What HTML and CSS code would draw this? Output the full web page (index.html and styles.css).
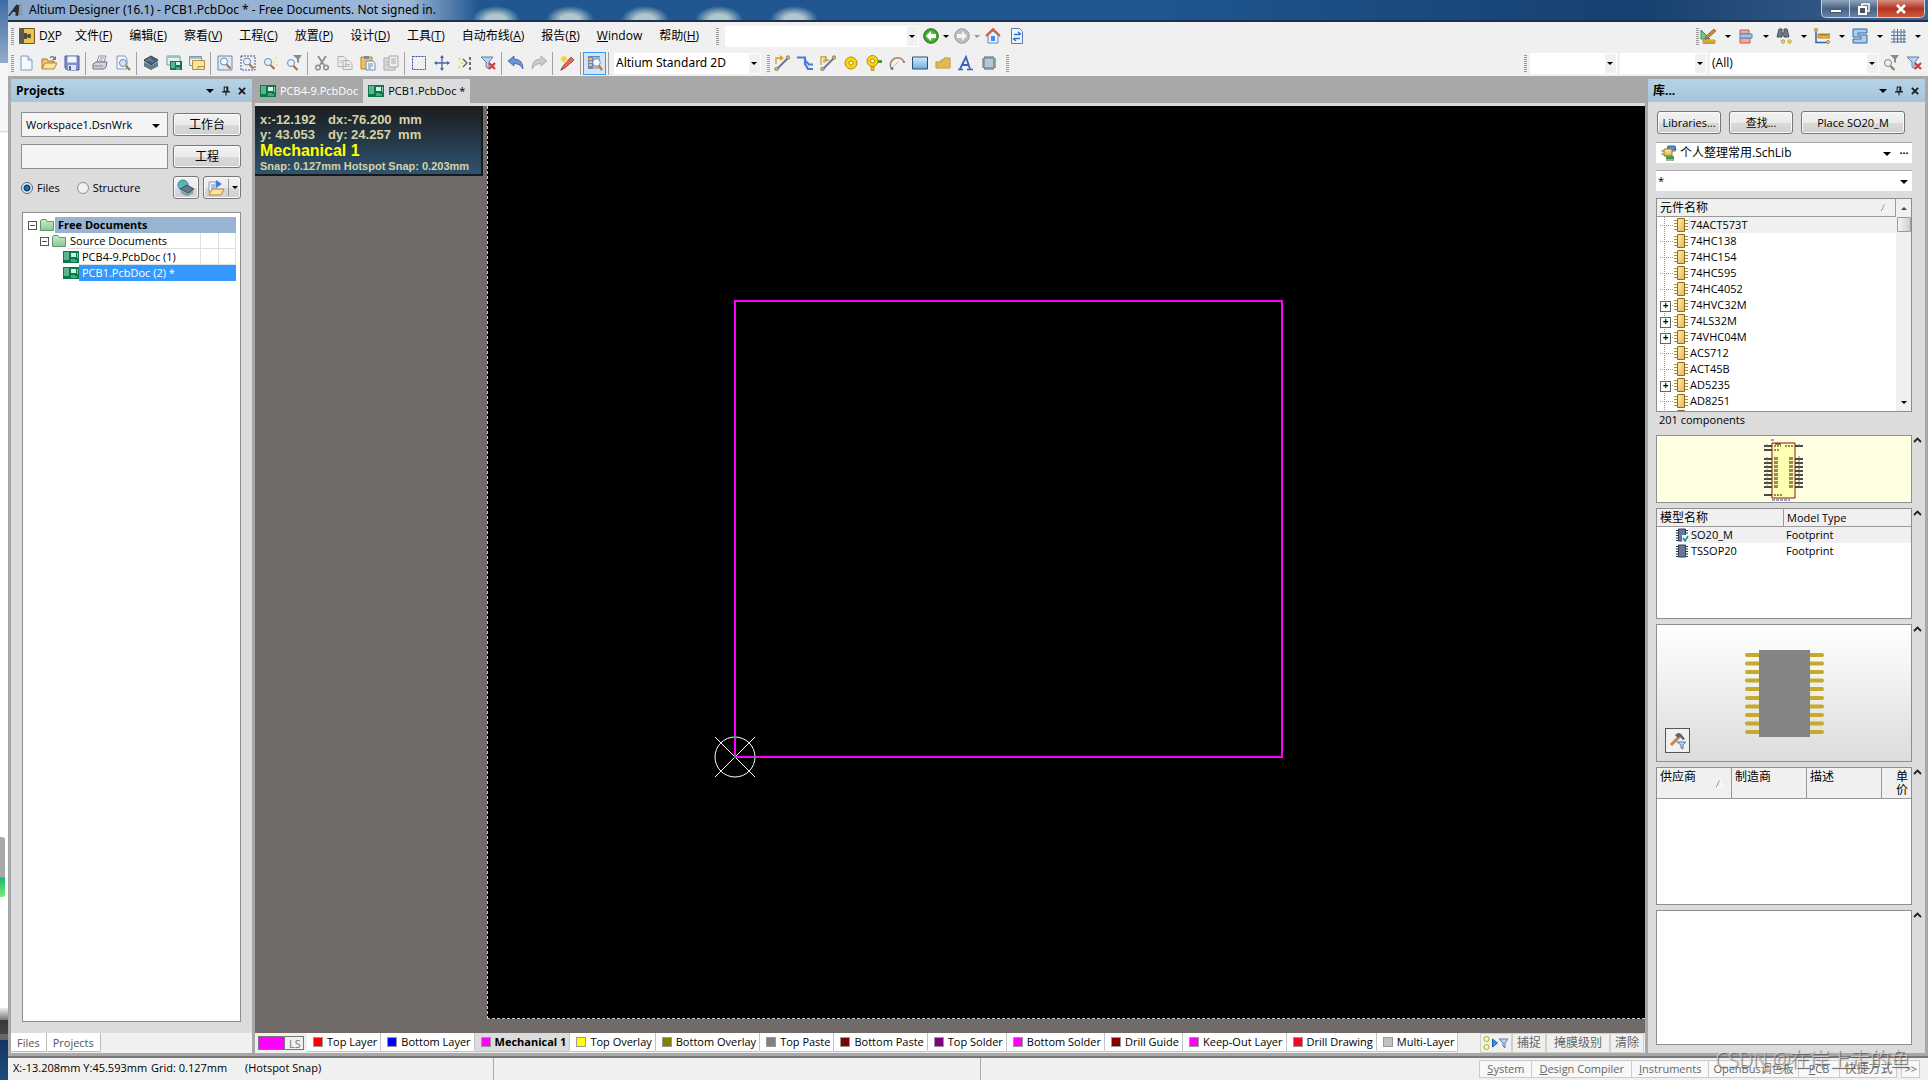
FILE: index.html
```html
<!DOCTYPE html>
<html lang="zh-CN">
<head>
    <meta charset="UTF-8">
    <meta name="viewport" content="width=device-width, initial-scale=1.0">
    <title>Altium Designer (16.1)</title>
    <link rel="stylesheet" href="styles.css">
</head>
<body>

    <!-- Shared icons -->
    <svg class="sprite" aria-hidden="true">
        <defs>
            <linearGradient id="gGold" x1="0" y1="0" x2="0" y2="1"><stop offset="0" stop-color="#fdf0b8"/><stop offset="1" stop-color="#e2a93a"/></linearGradient>
            <linearGradient id="gBlue" x1="0" y1="0" x2="0" y2="1"><stop offset="0" stop-color="#d6ecfa"/><stop offset="1" stop-color="#6fabd8"/></linearGradient>
            <linearGradient id="gChip" x1="0" y1="0" x2="1" y2="1"><stop offset="0" stop-color="#ffe9b0"/><stop offset="1" stop-color="#eeb64e"/></linearGradient>
            <linearGradient id="gFolder" x1="0" y1="0" x2="0" y2="1"><stop offset="0" stop-color="#c9ecc9"/><stop offset="1" stop-color="#8cc795"/></linearGradient>
            <radialGradient id="gGreen"><stop offset="0" stop-color="#8be05a"/><stop offset="1" stop-color="#2c9a25"/></radialGradient>
        </defs>
        <symbol id="i-new" viewBox="0 0 16 16"><path d="M3 1h7l4 4v10H3z" fill="#f4f9ff" stroke="#8796c4"/><path d="M10 1v4h4" fill="#dbe6f6" stroke="#8796c4"/></symbol>
        <symbol id="i-open" viewBox="0 0 16 16"><path d="M1 14V4h5l1 2h6v3" fill="#f0c877" stroke="#a8792c"/><path d="M1 14l3-6h12l-3 6z" fill="#fbe3a4" stroke="#b58534"/><path d="M9 3q3-3 5 1" fill="none" stroke="#6d7d95" stroke-width="1.3"/><path d="M15 1v4h-4z" fill="#6d7d95"/></symbol>
        <symbol id="i-save" viewBox="0 0 16 16"><path d="M1 1h14v14H3l-2-2z" fill="#7f8fc9" stroke="#4e5d98"/><path d="M3.500 1.500h9v6h-9z" fill="#f5f7fc"/><path d="M4 10h8v5H4z" fill="#e4e8f2"/><path d="M5 11h2v4H5z" fill="#4e5d98"/></symbol>
        <symbol id="i-print" viewBox="0 0 16 16"><path d="M5 7l2-6h7l-2 6z" fill="#fff" stroke="#8a8a96"/><path d="M1 9l3-2h11l-1 5-2 2H1z" fill="#cfd3dc" stroke="#70747f"/><path d="M2 11h9M8 3h4M7 5h4" stroke="#868b99"/></symbol>
        <symbol id="i-preview" viewBox="0 0 16 16"><path d="M2 1h8l2 3v10H2z" fill="#f3f7fd" stroke="#8796c4"/><circle cx="8" cy="8" r="3.500" fill="#cfe4f5" stroke="#6d86a8"/><path d="M11 11l4 4" stroke="#a97332" stroke-width="2.200"/></symbol>
        <symbol id="i-layers" viewBox="0 0 16 16"><path d="M1 6v5l7 4 7-4V6z" fill="#8fa6b4"/><path d="M2 8v4M4 9v4M6 10v4M8 11v4M10 10v4M12 9v4M14 8v4" stroke="#35505f"/><path d="M8 1l7 4-7 5-7-5z" fill="#4a6377" stroke="#2e4555"/><path d="M5 4l6 3M8 3l-5 3" stroke="#7b95a8"/></symbol>
        <symbol id="i-pcb" viewBox="0 0 16 12"><path d="M0 0h16v12H0z" fill="#0a7a4c"/><path d="M1 2h5M1 4h5M1 6h5M1 8h5" stroke="#bfe8d2"/><path d="M8 2h5v4H8z" fill="#d7f0e2"/><path d="M9 8v3M11 8v3M13 9v2M14.500 2v5" stroke="#8bd3ad"/></symbol>
        <symbol id="i-board" viewBox="0 0 16 16"><path d="M1 1h13v9H1z" fill="#e4f1f4" stroke="#7799a4"/><path d="M1 1h13v2H1z" fill="#9cc0cc"/><path d="M4 6h12v9H4z" fill="#0a7a4c"/><path d="M5 8h4M5 10h4M5 12h4" stroke="#bfe8d2"/><path d="M10 7h4v3h-4z" fill="#d7f0e2"/><path d="M11 12v3M13 12v3" stroke="#8bd3ad"/></symbol>
        <symbol id="i-sheets" viewBox="0 0 16 16"><path d="M.5 1.500h12v9H.5z" fill="#eef4e6" stroke="#7799a4"/><path d="M1 2h11v2H1z" fill="#9cc0cc"/><path d="M3.500 5.500h12v9h-12z" fill="#f7e3a2" stroke="#b0903f"/><path d="M9 14.500v-3h6" fill="none" stroke="#b0903f"/></symbol>
        <symbol id="i-zoomdoc" viewBox="0 0 16 16"><path d="M1 1h14v14H1z" fill="#dcebf8" stroke="#7089ac"/><circle cx="7" cy="6.500" r="3.500" fill="#f5fbff" stroke="#6d86a8"/><path d="M9.500 9.500l4 4" stroke="#a97332" stroke-width="2.200"/></symbol>
        <symbol id="i-zoomsel" viewBox="0 0 16 16"><path d="M1 1h14v14H1z" fill="none" stroke="#3a549c" stroke-dasharray="2 1"/><circle cx="7" cy="6.500" r="3.500" fill="#e5f2fc" stroke="#6d86a8"/><path d="M9.500 9.500l4 4" stroke="#a97332" stroke-width="2.200"/></symbol>
        <symbol id="i-zoompts" viewBox="0 0 16 16"><circle cx="5" cy="7" r="3.500" fill="#e5f2fc" stroke="#6d86a8"/><path d="M7.500 10l4 4" stroke="#a97332" stroke-width="2.200"/><circle cx="13" cy="3" r="1.500" fill="#f0ea94"/><circle cx="11" cy="7" r="1.500" fill="#f0ea94"/><circle cx="14" cy="10" r="1.500" fill="#f0ea94"/></symbol>
        <symbol id="i-zoomflt" viewBox="0 0 16 16"><circle cx="5" cy="8" r="3.500" fill="#e5f2fc" stroke="#6d86a8"/><path d="M7.500 11l4 4" stroke="#a97332" stroke-width="2.200"/><path d="M7 0h9l-3 4v4l-2-1V4z" fill="#8b8b8b"/></symbol>
        <symbol id="i-cut" viewBox="0 0 16 16"><path d="M4 1l6 9M12 1l-6 9" stroke="#8c8c8c" stroke-width="1.800"/><circle cx="4" cy="12.500" r="2.300" fill="none" stroke="#8c8c8c" stroke-width="1.500"/><circle cx="12" cy="12.500" r="2.300" fill="none" stroke="#8c8c8c" stroke-width="1.500"/></symbol>
        <symbol id="i-copy" viewBox="0 0 16 16"><path d="M1 1.500h6l2 2v8H1zM6 5.500h6l3 3v6H6z" fill="#ededed" stroke="#b0b0b0"/><path d="M8 9.500h5M8 11.500h5M3 5.500h2M3 7.500h2" stroke="#bbb"/></symbol>
        <symbol id="i-paste" viewBox="0 0 16 16"><path d="M1 2h11v12H1z" fill="#f1c45b" stroke="#b48628"/><path d="M4 1h5v3H4z" fill="#84879a"/><path d="M6 6h7l2 2v7H6z" fill="#f3f7fd" stroke="#7385b4"/><path d="M8 9h5M8 11h5M8 13h3" stroke="#7385b4"/></symbol>
        <symbol id="i-paste2" viewBox="0 0 16 16"><path d="M1 3h11v12H1z" fill="#dadada" stroke="#a9a9a9"/><path d="M6 1h9v11H6z" fill="#efefef" stroke="#a9a9a9"/><path d="M8 4h5M8 6h5M8 8h5M3 7h2M3 10h2" stroke="#aaa"/></symbol>
        <symbol id="i-select" viewBox="0 0 16 16"><path d="M1.500 1.500h13v13h-13z" fill="none" stroke="#2f4a9c" stroke-dasharray="2 1"/></symbol>
        <symbol id="i-move" viewBox="0 0 16 16"><path d="M8 1v14M1 8h14" stroke="#4a64a8" stroke-width="1.300"/><path d="M8 0l2 3H6zM8 16l2-3H6zM0 8l3-2v4zM16 8l-3-2v4z" fill="#4a64a8"/></symbol>
        <symbol id="i-spread" viewBox="0 0 16 16"><path d="M6 4l4 4-4 4" fill="none" stroke="#555" stroke-width="1.200"/><path d="M12 2h2v3h-2zM12 7h2v3h-2zM12 12h2v3h-2z" fill="#5b7297"/><circle cx="2.500" cy="4" r="1.500" fill="#e6e08c"/><circle cx="2.500" cy="12" r="1.500" fill="#e6e08c"/><circle cx="5" cy="8" r="1.500" fill="#e6e08c"/></symbol>
        <symbol id="i-clear" viewBox="0 0 16 16"><path d="M1 2h12L9 7v7l-3-2V7z" fill="#b9d2ee" stroke="#607fa8"/><path d="M9 8l6 6M15 8l-6 6" stroke="#d23c35" stroke-width="2.200"/></symbol>
        <symbol id="i-undo" viewBox="0 0 16 16"><path d="M0 6l6-5v3q9 0 9 10Q12 8.500 6 8.500V11z" fill="#6b93d6" stroke="#365fa6" stroke-width=".8"/></symbol>
        <symbol id="i-redo" viewBox="0 0 16 16"><path d="M16 6l-6-5v3Q1 4 1 14q3-5.500 9-5.500V11z" fill="#c9c9c9" stroke="#a3a3a3" stroke-width=".8"/></symbol>
        <symbol id="i-pencil" viewBox="0 0 16 16"><path d="M12 2l3 3-9 8-4 2 2-4z" fill="#e5685a" stroke="#8f3a32" stroke-width=".8"/><path d="M1 16l2-3 1 1z" fill="#444"/><path d="M5 0l1 2 2-1-1 2 2 1-2 1 1 2-2-1-1 2-1-2-2 1 1-2-2-1 2-1-1-2 2 1z" fill="#f7d13b"/></symbol>
        <symbol id="i-browse" viewBox="0 0 16 16"><path d="M1 1h12v13H1z" fill="#6f87b3"/><path d="M2 3h3v2H2zM2 6h3v2H2zM2 9h3v2H2z" fill="#e8c26c"/><path d="M6 2h7v12H6z" fill="#a9b8d2"/><circle cx="9.500" cy="7.500" r="3.800" fill="#f5fbff" stroke="#7089ac"/><path d="M12 11l3 4" stroke="#b98133" stroke-width="2.400"/></symbol>
        <symbol id="i-route" viewBox="0 0 16 16"><path d="M2 9V3h4" fill="none" stroke="#cc9b2a" stroke-width="1.300"/><path d="M6 0l4 3-4 3z" fill="#dba32a"/><path d="M3 14L14 3" stroke="#66789a" stroke-width="2"/><circle cx="14" cy="2.500" r="1.800" fill="#c6b37c" stroke="#8a7a49" stroke-width=".7"/><circle cx="2.500" cy="14" r="1.800" fill="#c6b37c" stroke="#8a7a49" stroke-width=".7"/></symbol>
        <symbol id="i-multi" viewBox="0 0 16 16"><path d="M0 2.500h8V9l3 5h5M8 5.500l4 4h4" fill="none" stroke="#4b7cd2" stroke-width="2.200"/></symbol>
        <symbol id="i-diff" viewBox="0 0 16 16"><path d="M1 10V2h5M4 8V5h5M6 1v6" fill="none" stroke="#cc9b2a" stroke-width="1.300"/><path d="M3 14L14 3" stroke="#66789a" stroke-width="2"/><circle cx="14" cy="2.500" r="1.800" fill="#c6b37c" stroke="#8a7a49" stroke-width=".7"/><circle cx="2.500" cy="14" r="1.800" fill="#c6b37c" stroke="#8a7a49" stroke-width=".7"/></symbol>
        <symbol id="i-pad" viewBox="0 0 16 16"><circle cx="8" cy="8" r="6" fill="#fbd40e" stroke="#b18c0d"/><circle cx="8" cy="8" r="2" fill="#fff" stroke="#b18c0d"/></symbol>
        <symbol id="i-via" viewBox="0 0 16 16"><path d="M9 5h7v3H9z" fill="#3fa02e"/><path d="M5 9h3v7H5z" fill="#e5b911" stroke="#a9860f" stroke-width=".6"/><circle cx="6.500" cy="6" r="5.500" fill="#fbd40e" stroke="#b18c0d"/><circle cx="6.500" cy="6" r="2" fill="#fff" stroke="#b18c0d"/></symbol>
        <symbol id="i-arc" viewBox="0 0 16 16"><path d="M2 13A7 7 0 1 1 15 7" fill="none" stroke="#b27f58" stroke-width="1.500"/><path d="M3 13l7-7" stroke="#7d8fae" stroke-dasharray="1 1"/><circle cx="3" cy="13.500" r="1.500" fill="#5e76a5"/><circle cx="15" cy="7" r="1" fill="#5e76a5"/></symbol>
        <symbol id="i-fill" viewBox="0 0 16 16"><path d="M.5 2h15v12H.5z" fill="url(#gBlue)" stroke="#2c4f78"/></symbol>
        <symbol id="i-poly" viewBox="0 0 16 16"><path d="M1 7h5V5h3V3h6v10H1z" fill="#fbe08a" stroke="#c08f25"/><path d="M1 9h14M1 11h14M6 7h9M9 5h6M3 7v6M5 7v6M7 5v8M9 5v8M11 3v10M13 3v10" stroke="#c8962c" stroke-width=".6"/></symbol>
        <symbol id="i-text" viewBox="0 0 16 16"><path d="M2 14L8 2l4 12M4 10h6" fill="none" stroke="#3a62c0" stroke-width="1.800"/><path d="M0 14.500h5M9 14.500h6" stroke="#3a62c0" stroke-width="1.500"/></symbol>
        <symbol id="i-comp" viewBox="0 0 16 16"><path d="M4 1v14M6 1v14M8 1v14M10 1v14M12 1v14M1 4h14M1 6h14M1 8h14M1 10h14M1 12h14" stroke="#4d6272"/><path d="M3 3h10v10H3z" fill="#b4c8d2" stroke="#5d7684"/></symbol>
        <symbol id="i-dxp" viewBox="0 0 16 16"><path d="M.5.500h15v15H.5z" fill="#ecc34c" stroke="#6d5a22"/><path d="M1 1h4v14H1z" fill="#5b5b55"/><path d="M5 5h3v2q4-3 4 1t-4 1v2H5z" fill="#4d4b43"/></symbol>
        <symbol id="i-back" viewBox="0 0 16 16"><circle cx="8" cy="8" r="7.300" fill="url(#gGreen)" stroke="#27751f"/><path d="M3 8l5-5v3h5v4H8v3z" fill="#fff"/></symbol>
        <symbol id="i-fwd" viewBox="0 0 16 16"><circle cx="8" cy="8" r="7.300" fill="#bdbdbd" stroke="#9c9c9c"/><path d="M13 8L8 3v3H3v4h5v3z" fill="#f4f4f4"/></symbol>
        <symbol id="i-home" viewBox="0 0 16 16"><path d="M3 7v8h10V7L8 3z" fill="#e8f0fa" stroke="#6d86a8"/><path d="M6 8h4v5H6z" fill="#3d8fe8"/><path d="M1 8l7-7 7 7" fill="none" stroke="#d6562d" stroke-width="1.800"/></symbol>
        <symbol id="i-sync" viewBox="0 0 16 16"><path d="M2.500.5h8l3 3v12h-11z" fill="#f3f8ff" stroke="#5a78b8"/><path d="M5 6.500h6M9 4l3 2.500M11 10.500H5M7 13l-3-2.500" fill="none" stroke="#2673d6" stroke-width="1.600"/></symbol>
        <symbol id="i-draw" viewBox="0 0 16 16"><path d="M1 2l9 9H1z" fill="#6cc98c" stroke="#2c8f56"/><path d="M14 1l2 2-8 7-3 1 1-3z" fill="#c68934" stroke="#80541c" stroke-width=".7"/><path d="M3 12h12v3.500H3z" fill="#f2c13b" stroke="#b48628" stroke-width=".8"/><path d="M5 13v2M7 13v2M9 13v2M11 13v2M13 13v2" stroke="#94701f" stroke-width=".7"/></symbol>
        <symbol id="i-align" viewBox="0 0 16 16"><path d="M2 2h9v4H2z" fill="#f3a8a4" stroke="#c85850"/><path d="M2 10h10v5H2z" fill="#f3a8a4" stroke="#c85850"/><path d="M2 6h12v4H2z" fill="#9ac8ec" stroke="#4f86b6"/></symbol>
        <symbol id="i-find" viewBox="0 0 16 16"><path d="M1 9l2-8h3v4h2V1h3l2 8H8V7H6v2z" fill="#6f7c88" stroke="#47525c"/><circle cx="7" cy="13.500" r="1.700" fill="#f3dc79" stroke="#b59a32"/><circle cx="13.500" cy="13.500" r="1.700" fill="#f3dc79" stroke="#b59a32"/></symbol>
        <symbol id="i-dim" viewBox="0 0 16 16"><path d="M2 2v12.500h12" fill="none" stroke="#3a5fa8" stroke-width="1.500"/><circle cx="2" cy="2" r="1.500" fill="#f3dc79" stroke="#a0852c"/><circle cx="14" cy="14" r="1.500" fill="#f3dc79" stroke="#a0852c"/><path d="M4 6h12v4H4z" fill="#f2b544" stroke="#b48628"/><path d="M6 6v2M8 6v2M10 6v2M12 6v2M14 6v2" stroke="#94701f"/></symbol>
        <symbol id="i-room" viewBox="0 0 16 16"><path d="M1 1h14v4H6v2h9v8H1v-4h8V9H1z" fill="#a4d0ee" stroke="#35699c"/></symbol>
        <symbol id="i-grid" viewBox="0 0 16 16"><path d="M4 1v14M7.500 1v14M11 1v14M14 1v14M1 4h15M1 7.500h15M1 11h15M1 14h15" stroke="#5375a4"/></symbol>
        <symbol id="i-pin" viewBox="0 0 9 10"><path d="M2.500.5h4v5h-4zM5.500.5v5M0 6h9M4.500 6v4" fill="none" stroke="#1a1a1a" stroke-width="1.200"/></symbol>
        <symbol id="i-close" viewBox="0 0 9 9"><path d="M1 1l7 7M8 1L1 8" stroke="#1a1a1a" stroke-width="2"/></symbol>
        <symbol id="i-folder" viewBox="0 0 14 12"><path d="M.5 11.500v-10L2 .5h4l1 2h6.500v9z" fill="url(#gFolder)" stroke="#5a9a66"/></symbol>
        <symbol id="i-part" viewBox="0 0 14 16"><path d="M0 3.500h14M0 6.500h14M0 9.500h14M0 12.500h14" stroke="#a98f2c"/><path d="M3.500 1.500h7v13h-7z" fill="url(#gChip)" stroke="#8a6d20"/></symbol>
        <symbol id="i-foot" viewBox="0 0 12 14"><path d="M0 3h12M0 5.500h12M0 8h12M0 10.500h12M0 13h12" stroke="#27313f"/><path d="M2.500 1.500h7v12h-7z" fill="#66779c" stroke="#333f5c"/></symbol>
        <symbol id="i-lib" viewBox="0 0 16 16"><path d="M7 1h7l1 4H6z" fill="#4f8fe0" stroke="#2a5ca5"/><path d="M3 4h8v7H3z" fill="url(#gGold)" stroke="#9a741b"/><path d="M0 6h3M0 9h3M11 6h4" stroke="#9a741b"/><path d="M5 11h8v3H5z" fill="#4aa04a"/><path d="M6 13v3M8 13v3M10 13v3M12 13v3" stroke="#2d7a2d"/></symbol>
        <symbol id="i-globe" viewBox="0 0 18 18"><circle cx="6" cy="6" r="5" fill="#58b3e8" stroke="#2b7db5"/><path d="M3 3q4-2 5 1t-4 3z" fill="#5cc25c"/><path d="M3 10v3l8 4 6-4v-3z" fill="#c3d0d8"/><path d="M5 12v3M7 13v3M9 14v3M11 14v3M13 13v3M15 12v3" stroke="#54707f"/><path d="M10 6l7 4-6 4-8-4z" fill="#64798a" stroke="#3c5363"/></symbol>
        <symbol id="i-docs" viewBox="0 0 18 18"><path d="M2 3h7v10H2z" fill="#f5f8fd" stroke="#8a97b5"/><path d="M4 6h4M4 8h4M4 10h4" stroke="#6d86c8"/><path d="M9 1l6 4-6 4z" fill="#3f7fe0"/><path d="M2 16l3-6h12l-3 6z" fill="#fbe3a4" stroke="#b58534"/></symbol>
        <symbol id="i-hammer" viewBox="0 0 18 18"><path d="M2 13l8-8" stroke="#c9834a" stroke-width="3"/><path d="M6 3q4-4 7 0l3 4-2 1-3-3-2 1z" fill="#5d6570"/><path d="M8 10h9l-3 3v4l-2-1v-3z" fill="#b9d2ee" stroke="#607fa8"/></symbol>
        <symbol id="i-mask" viewBox="0 0 26 16"><circle cx="3.500" cy="4" r="2.500" fill="#fbfbd0" stroke="#a9a91c"/><circle cx="3.500" cy="12" r="2.500" fill="#fbfbd0" stroke="#a9a91c"/><path d="M9.500 4l5 4-5 4z" fill="#3f8fe0" stroke="#1d5fae"/><path d="M16 4h9l-3 4v5l-2-2V8z" fill="#b9d2ee" stroke="#607fa8"/></symbol>
        <symbol id="i-chev" viewBox="0 0 9 6"><path d="M1 5l3.500-3.500L8 5" fill="none" stroke="#222" stroke-width="1.800"/></symbol>
        <symbol id="i-sort" viewBox="0 0 8 8"><path d="M3.500.5L7 7.500H0" fill="none" stroke="#fff"/><path d="M0 7.500L3.500.5" stroke="#999"/></symbol>
    </svg>

    <div class="desktop">
        <div class="desktop-edge">
            <span class="edge-thumb"></span>
            <span class="edge-task"></span>
        </div>

        <div class="window">
            <!-- Title Bar -->
            <header class="titlebar">
                <svg class="logo" viewBox="0 0 16 14"><path d="M0 13L9 1l3 1-1 11H8V9H5l-3 4z" fill="#2b2b2b"/><path d="M12 2h3M12 5h3M12 8h3M12 11h3" stroke="#9a8a58" stroke-width="1.500"/></svg>
                <h1>Altium Designer (16.1) - PCB1.PcbDoc * - Free Documents. Not signed in.</h1>
                <div class="window-buttons">
                    <button aria-label="Minimize"><svg viewBox="0 0 12 10"><path d="M.5 5.500h11v3H.5z" fill="#fff" stroke="#45536a"/></svg></button>
                    <button aria-label="Restore"><svg viewBox="0 0 12 12"><path d="M4 1h7v7H4z" fill="none" stroke="#fff" stroke-width="1.500"/><path d="M1 4h7v7H1z" fill="#45536a" stroke="#fff" stroke-width="2"/></svg></button>
                    <button class="close" aria-label="Close"><svg viewBox="0 0 12 10"><path d="M2 1l8 8M10 1L2 9" stroke="#fff" stroke-width="2.600"/></svg></button>
                </div>
            </header>

            <!-- Menu Bar -->
            <div class="bar">
                <span class="grip"></span>
                <nav class="menu">
                    <a href="#" class="menu-dxp"><svg class="icon"><use href="#i-dxp"/></svg>D<u>X</u>P</a>
                    <a href="#">文件(<u>F</u>)</a>
                    <a href="#">编辑(<u>E</u>)</a>
                    <a href="#">察看(<u>V</u>)</a>
                    <a href="#">工程(<u>C</u>)</a>
                    <a href="#">放置(<u>P</u>)</a>
                    <a href="#">设计(<u>D</u>)</a>
                    <a href="#">工具(<u>T</u>)</a>
                    <a href="#">自动布线(<u>A</u>)</a>
                    <a href="#">报告(<u>R</u>)</a>
                    <a href="#"><u>W</u>indow</a>
                    <a href="#">帮助(<u>H</u>)</a>
                </nav>
                <span class="grip"></span>
                <label class="combo combo-address"><select aria-label="Address"><option></option></select></label>
                <div class="nav-buttons">
                    <button class="tool" aria-label="Back"><svg class="icon"><use href="#i-back"/></svg></button>
                    <span class="arrow"></span>
                    <button class="tool" aria-label="Forward"><svg class="icon"><use href="#i-fwd"/></svg></button>
                    <span class="arrow dim"></span>
                    <button class="tool" aria-label="Home"><svg class="icon"><use href="#i-home"/></svg></button>
                    <button class="tool" aria-label="Refresh"><svg class="icon"><use href="#i-sync"/></svg></button>
                </div>
                <div class="bar-end utilities">
                    <span class="grip"></span>
                    <button class="drop-tool" aria-label="Utilities"><svg class="icon"><use href="#i-draw"/></svg><span class="arrow"></span></button>
                    <button class="drop-tool" aria-label="Align"><svg class="icon"><use href="#i-align"/></svg><span class="arrow"></span></button>
                    <button class="drop-tool" aria-label="Find"><svg class="icon"><use href="#i-find"/></svg><span class="arrow"></span></button>
                    <button class="drop-tool" aria-label="Dimension"><svg class="icon"><use href="#i-dim"/></svg><span class="arrow"></span></button>
                    <button class="drop-tool" aria-label="Room"><svg class="icon"><use href="#i-room"/></svg><span class="arrow"></span></button>
                    <button class="drop-tool" aria-label="Grid"><svg class="icon"><use href="#i-grid"/></svg><span class="arrow"></span></button>
                </div>
            </div>

            <!-- Toolbar -->
            <div class="bar toolbar">
                <span class="grip"></span>
                <button class="tool" aria-label="New"><svg class="icon"><use href="#i-new"/></svg></button>
                <button class="tool" aria-label="Open"><svg class="icon"><use href="#i-open"/></svg></button>
                <button class="tool" aria-label="Save"><svg class="icon"><use href="#i-save"/></svg></button>
                <span class="sep"></span>
                <button class="tool" aria-label="Print"><svg class="icon"><use href="#i-print"/></svg></button>
                <button class="tool" aria-label="Preview"><svg class="icon"><use href="#i-preview"/></svg></button>
                <span class="sep"></span>
                <button class="tool" aria-label="Devices"><svg class="icon"><use href="#i-layers"/></svg></button>
                <button class="tool" aria-label="Board"><svg class="icon"><use href="#i-board"/></svg></button>
                <button class="tool" aria-label="Sheets"><svg class="icon"><use href="#i-sheets"/></svg></button>
                <span class="sep"></span>
                <button class="tool" aria-label="Fit document"><svg class="icon"><use href="#i-zoomdoc"/></svg></button>
                <button class="tool" aria-label="Fit area"><svg class="icon"><use href="#i-zoomsel"/></svg></button>
                <button class="tool" aria-label="Zoom selected"><svg class="icon"><use href="#i-zoompts"/></svg></button>
                <button class="tool" aria-label="Zoom filtered"><svg class="icon"><use href="#i-zoomflt"/></svg></button>
                <span class="sep"></span>
                <button class="tool" aria-label="Cut"><svg class="icon"><use href="#i-cut"/></svg></button>
                <button class="tool" aria-label="Copy"><svg class="icon"><use href="#i-copy"/></svg></button>
                <button class="tool" aria-label="Paste"><svg class="icon"><use href="#i-paste"/></svg></button>
                <button class="tool" aria-label="Rubber stamp"><svg class="icon"><use href="#i-paste2"/></svg></button>
                <span class="sep"></span>
                <button class="tool" aria-label="Select"><svg class="icon"><use href="#i-select"/></svg></button>
                <button class="tool" aria-label="Move"><svg class="icon"><use href="#i-move"/></svg></button>
                <button class="tool" aria-label="Deselect"><svg class="icon"><use href="#i-spread"/></svg></button>
                <button class="tool" aria-label="Clear filter"><svg class="icon"><use href="#i-clear"/></svg></button>
                <span class="sep"></span>
                <button class="tool" aria-label="Undo"><svg class="icon"><use href="#i-undo"/></svg></button>
                <button class="tool" aria-label="Redo"><svg class="icon"><use href="#i-redo"/></svg></button>
                <span class="sep"></span>
                <button class="tool" aria-label="Cross probe"><svg class="icon"><use href="#i-pencil"/></svg></button>
                <span class="sep"></span>
                <button class="tool active" aria-label="Browse"><svg class="icon"><use href="#i-browse"/></svg></button>
                <span class="sep"></span>
                <label class="combo combo-view"><select aria-label="View"><option>Altium Standard 2D</option></select></label>
                <span class="grip"></span>
                <button class="tool" aria-label="Route"><svg class="icon"><use href="#i-route"/></svg></button>
                <button class="tool" aria-label="Multi route"><svg class="icon"><use href="#i-multi"/></svg></button>
                <button class="tool" aria-label="Differential pair"><svg class="icon"><use href="#i-diff"/></svg></button>
                <button class="tool" aria-label="Pad"><svg class="icon"><use href="#i-pad"/></svg></button>
                <button class="tool" aria-label="Via"><svg class="icon"><use href="#i-via"/></svg></button>
                <button class="tool" aria-label="Arc"><svg class="icon"><use href="#i-arc"/></svg></button>
                <button class="tool" aria-label="Fill"><svg class="icon"><use href="#i-fill"/></svg></button>
                <button class="tool" aria-label="Polygon"><svg class="icon"><use href="#i-poly"/></svg></button>
                <button class="tool" aria-label="String"><svg class="icon"><use href="#i-text"/></svg></button>
                <button class="tool" aria-label="Component"><svg class="icon"><use href="#i-comp"/></svg></button>
                <span class="grip last-grip"></span>
                <div class="bar-end filters">
                    <span class="grip"></span>
                    <label class="combo combo-filter"><select aria-label="Net"><option></option></select></label>
                    <label class="combo combo-filter"><select aria-label="Component filter"><option></option></select></label>
                    <label class="combo combo-all"><select aria-label="Filter"><option>(All)</option></select></label>
                    <button class="tool" aria-label="Zoom filter"><svg class="icon"><use href="#i-zoomflt"/></svg></button>
                    <button class="tool" aria-label="Clear"><svg class="icon"><use href="#i-clear"/></svg></button>
                </div>
            </div>

            <main class="workspace">
                <!-- Projects Panel -->
                <aside class="panel projects">
                    <div class="panel-head">
                        <h2>Projects</h2>
                        <span class="arrow big"></span>
                        <svg class="pin"><use href="#i-pin"/></svg>
                        <svg class="shut"><use href="#i-close"/></svg>
                    </div>
                    <div class="project-form">
                        <label class="combo field"><select aria-label="Workspace"><option>Workspace1.DsnWrk</option></select></label>
                        <button class="btn">工作台</button>
                        <input type="text" class="field" aria-label="Project">
                        <button class="btn">工程</button>
                        <div class="radios">
                            <label><input type="radio" name="view" checked>Files</label>
                            <label><input type="radio" name="view">Structure</label>
                        </div>
                        <div class="btn-pair">
                            <button class="btn" aria-label="Web"><svg><use href="#i-globe"/></svg></button>
                            <button class="btn split" aria-label="Open documents"><svg><use href="#i-docs"/></svg><i></i><span class="arrow"></span></button>
                        </div>
                    </div>
                    <div class="tree">
                        <div class="tree-row root"><span class="box">−</span><svg class="folder"><use href="#i-folder"/></svg><b class="tree-text">Free Documents</b></div>
                        <div class="tree-row level1"><span class="box">−</span><svg class="folder"><use href="#i-folder"/></svg><span class="tree-text lined">Source Documents</span></div>
                        <div class="tree-row level2"><svg class="pcb"><use href="#i-pcb"/></svg><span class="tree-text lined">PCB4-9.PcbDoc (1)</span></div>
                        <div class="tree-row level2"><svg class="pcb"><use href="#i-pcb"/></svg><span class="tree-text selected">PCB1.PcbDoc (2) *</span></div>
                    </div>
                    <div class="panel-tabs">
                        <a href="#">Files</a>
                        <a href="#">Projects</a>
                    </div>
                </aside>

                <!-- Editor -->
                <section class="editor">
                    <div class="doc-tabs">
                        <a href="#"><svg class="pcb"><use href="#i-pcb"/></svg>PCB4-9.PcbDoc</a>
                        <a href="#" class="current"><svg class="pcb"><use href="#i-pcb"/></svg>PCB1.PcbDoc *</a>
                    </div>
                    <div class="canvas">
                        <div class="board">
                            <svg class="outline">
                                <rect x="247" y="195" width="547" height="456" fill="none" stroke="#f0f" stroke-width="2"/>
                                <circle cx="247" cy="651" r="20" fill="none" stroke="#fff"/>
                                <path d="M227 631l40 40M267 631l-40 40" stroke="#fff"/>
                                <path d="M246 631h2M266 651h2M246 651h2" stroke="#0c0" stroke-width="2"/>
                            </svg>
                        </div>
                        <div class="hud">
                            <table>
                                <tr><td>x:-12.192</td><td>dx:-76.200&nbsp; mm</td></tr>
                                <tr><td>y: 43.053</td><td>dy: 24.257&nbsp; mm</td></tr>
                            </table>
                            <strong>Mechanical 1</strong>
                            <p>Snap: 0.127mm Hotspot Snap: 0.203mm</p>
                        </div>
                    </div>
                    <div class="layer-bar">
                        <button class="layer-set"><span class="layer-colour"></span><span>LS</span></button>
                        <div class="layers">
                            <a href="#"><i class="red"></i>Top Layer</a>
                            <a href="#"><i class="blue"></i>Bottom Layer</a>
                            <a href="#" class="current"><i class="magenta"></i>Mechanical 1</a>
                            <a href="#"><i class="yellow"></i>Top Overlay</a>
                            <a href="#"><i class="olive"></i>Bottom Overlay</a>
                            <a href="#"><i class="gray"></i>Top Paste</a>
                            <a href="#"><i class="maroon"></i>Bottom Paste</a>
                            <a href="#"><i class="purple"></i>Top Solder</a>
                            <a href="#"><i class="magenta"></i>Bottom Solder</a>
                            <a href="#"><i class="maroon"></i>Drill Guide</a>
                            <a href="#"><i class="magenta"></i>Keep-Out Layer</a>
                            <a href="#"><i class="crimson"></i>Drill Drawing</a>
                            <a href="#"><i class="silver"></i>Multi-Layer</a>
                        </div>
                        <div class="mask-buttons">
                            <button aria-label="Mask"><svg class="mask"><use href="#i-mask"/></svg></button>
                            <button>捕捉</button>
                            <button>掩膜级别</button>
                            <button>清除</button>
                        </div>
                    </div>
                </section>

                <!-- Libraries Panel -->
                <aside class="panel library">
                    <div class="panel-head">
                        <h2>库...</h2>
                        <span class="arrow big"></span>
                        <svg class="pin"><use href="#i-pin"/></svg>
                        <svg class="shut"><use href="#i-close"/></svg>
                    </div>
                    <div class="library-body">
                        <div class="library-buttons">
                            <button class="btn">Libraries...</button>
                            <button class="btn">查找...</button>
                            <button class="btn">Place SO20_M</button>
                        </div>
                        <div class="library-pick">
                            <svg class="icon"><use href="#i-lib"/></svg>
                            <label class="combo"><select aria-label="Library"><option>个人整理常用.SchLib</option></select></label>
                            <button aria-label="More">•••</button>
                        </div>
                        <label class="combo mask-field"><select aria-label="Mask"><option>*</option></select></label>

                        <div class="box-frame part-list">
                            <div class="list-main">
                                <div class="list-head"><span>元件名称</span><svg class="sort"><use href="#i-sort"/></svg></div>
                                <ul>
                                    <li class="on"><span class="stem"></span><svg class="part"><use href="#i-part"/></svg><span>74ACT573T</span></li>
                                    <li><span class="stem"></span><svg class="part"><use href="#i-part"/></svg><span>74HC138</span></li>
                                    <li><span class="stem"></span><svg class="part"><use href="#i-part"/></svg><span>74HC154</span></li>
                                    <li><span class="stem"></span><svg class="part"><use href="#i-part"/></svg><span>74HC595</span></li>
                                    <li><span class="stem"></span><svg class="part"><use href="#i-part"/></svg><span>74HC4052</span></li>
                                    <li><span class="stem plus"></span><svg class="part"><use href="#i-part"/></svg><span>74HVC32M</span></li>
                                    <li><span class="stem plus"></span><svg class="part"><use href="#i-part"/></svg><span>74LS32M</span></li>
                                    <li><span class="stem plus"></span><svg class="part"><use href="#i-part"/></svg><span>74VHC04M</span></li>
                                    <li><span class="stem"></span><svg class="part"><use href="#i-part"/></svg><span>ACS712</span></li>
                                    <li><span class="stem"></span><svg class="part"><use href="#i-part"/></svg><span>ACT45B</span></li>
                                    <li><span class="stem plus"></span><svg class="part"><use href="#i-part"/></svg><span>AD5235</span></li>
                                    <li><span class="stem"></span><svg class="part"><use href="#i-part"/></svg><span>AD8251</span></li>
                                    <li><span class="stem"></span><svg class="part"><use href="#i-part"/></svg></li>
                                </ul>
                            </div>
                            <div class="scrollbar"><span class="arrow up"></span><span class="thumb"></span><span class="arrow"></span></div>
                        </div>
                        <p class="count">201 components</p>

                        <div class="fold symbol-fold">
                            <div class="box-frame symbol-view">
                                <svg viewBox="0 0 40 66">
                                    <path d="M0 10h8M0 14h8M0 23h8M0 27h8M0 31h8M0 35h8M0 39h8M0 43h8M0 47h8M0 51h8M0 59h8M31 10h8M31 23h8M31 27h8M31 31h8M31 35h8M31 39h8M31 43h8M31 47h8M31 51h8" stroke="#111" stroke-width="1.500"/>
                                    <path d="M3 8v3M3 21v31M35 8v2M35 20v30" stroke="#777" stroke-dasharray="2 2"/>
                                    <path d="M8 7h23v55H8z" fill="#ffffb0" stroke="#8a1010"/>
                                    <path d="M12 21v31M27 21v31" stroke="#8f8c5c" stroke-width="4" stroke-dasharray="3 1"/>
                                    <path d="M10 10h7M10 14h5M21 10h8M10 59h9" stroke="#8f8c5c" stroke-width="2" stroke-dasharray="2 1"/>
                                    <path d="M11 8h6" stroke="#111"/>
                                    <path d="M7 4h4M8 64h18" stroke="#9a9ad8" stroke-width="2" stroke-dasharray="3 1"/>
                                </svg>
                            </div>
                            <svg class="chev"><use href="#i-chev"/></svg>
                        </div>

                        <div class="fold model-fold">
                            <div class="box-frame">
                                <table class="models">
                                    <tr><th>模型名称</th><th>Model Type</th></tr>
                                    <tr class="on"><td><svg class="foot"><use href="#i-foot"/></svg>SO20_M<svg class="tick" viewBox="0 0 7 7"><path d="M0 0h7v7H0z" fill="#e6f6f6"/><path d="M1 3l2 3 3-5" fill="none" stroke="#17918f" stroke-width="1.500"/></svg></td><td>Footprint</td></tr>
                                    <tr><td><svg class="foot"><use href="#i-foot"/></svg>TSSOP20</td><td>Footprint</td></tr>
                                </table>
                            </div>
                            <svg class="chev"><use href="#i-chev"/></svg>
                        </div>

                        <div class="fold footprint-fold">
                            <div class="box-frame footprint-view">
                                <svg class="footprint" viewBox="0 0 79 88">
                                    <path d="M2 5h75M2 13.500h75M2 22h75M2 30.500h75M2 39h75M2 48h75M2 56.500h75M2 65h75M2 73.500h75M2 82h75" stroke="#c4ab2a" stroke-width="4" stroke-linecap="round"/>
                                    <path d="M14 0h51v87H14z" fill="#848484"/>
                                </svg>
                                <button aria-label="Build"><svg><use href="#i-hammer"/></svg></button>
                            </div>
                            <svg class="chev"><use href="#i-chev"/></svg>
                        </div>

                        <div class="fold supplier-fold">
                            <div class="box-frame">
                                <table class="suppliers">
                                    <tr><th><span>供应商<svg class="sort"><use href="#i-sort"/></svg></span></th><th>制造商</th><th>描述</th><th>单价</th></tr>
                                </table>
                            </div>
                            <svg class="chev"><use href="#i-chev"/></svg>
                        </div>

                        <div class="fold last-fold">
                            <div class="box-frame"></div>
                            <svg class="chev"><use href="#i-chev"/></svg>
                        </div>
                    </div>
                </aside>
            </main>

            <!-- Status Bar -->
            <footer class="status">
                <div class="status-text">
                    <span>X:-13.208mm Y:45.593mm</span>
                    <span>Grid: 0.127mm</span>
                    <span>(Hotspot Snap)</span>
                </div>
                <div class="status-cell"></div>
                <div class="status-buttons">
                    <button><u>S</u>ystem</button>
                    <button><u>D</u>esign Compiler</button>
                    <button><u>I</u>nstruments</button>
                    <button class="tight">OpenBus调色板</button>
                    <button class="wide"><u>P</u>CB</button>
                    <button class="tight cjk">快捷方式</button>
                    <button class="more">&gt;&gt;</button>
                </div>
                <span class="watermark">CSDN @在岸上走的鱼</span>
            </footer>
        </div>
    </div>

</body>
</html>
```

FILE: styles.css
```css
* {
    box-sizing: border-box;
}

body {
    margin: 0;
    font-family: "Open Sans", "Noto Sans CJK SC", sans-serif;
    font-size: 11px;
    line-height: 16px;
    color: #000;
    background: #f0f0f0;
}

button, select, input {
    font: inherit;
    color: inherit;
    margin: 0;
}

button {
    padding: 0;
    border: 0;
    background: none;
    white-space: nowrap;
}

a {
    color: inherit;
    text-decoration: none;
}

h1, h2, p, ul {
    margin: 0;
    padding: 0;
}

svg {
    display: block;
    flex: none;
}

.sprite {
    position: absolute;
    width: 0;
    height: 0;
}

.icon {
    width: 16px;
    height: 16px;
}

.desktop {
    display: flex;
    min-height: 100vh;
}

.desktop-edge {
    width: 8px;
    display: flex;
    flex-direction: column;
    justify-content: flex-end;
    background: linear-gradient(#3d6da4 0, #93abc9 63px, #f3f5f9 63px, #f5f6fa 131px, #ccc 131px, #fff 133px);
}

.edge-thumb {
    height: 60px;
    width: 5px;
    margin-bottom: 111px;
    border-radius: 0 3px 3px 0;
    background: linear-gradient(#a8a8a8 40px, #1fb864 41px, #74ec80);
}

.edge-task {
    height: 72px;
    background: linear-gradient(#eee, #777 12px, #333b3d 12px, #444 26px, #666 26px, #666 32px, #16365f 32px, #1b4b80);
}

.window {
    flex: 1;
    min-width: 0;
    display: flex;
    flex-direction: column;
}

/* Title bar */
.titlebar {
    height: 22px;
    display: flex;
    align-items: center;
    gap: 6px;
    border-bottom: 2px solid #1c3050;
    background:
        linear-gradient(90deg, #8ba9cd 0, #9db8d8 400px, #9db8d800 470px),
        radial-gradient(ellipse 24px 14px at 488px 20px, #b0c8cc 40%, transparent),
        radial-gradient(ellipse 24px 14px at 562px 20px, #b0c8cc 40%, transparent),
        radial-gradient(ellipse 24px 14px at 637px 20px, #b0c8cc 40%, transparent),
        radial-gradient(ellipse 24px 14px at 711px 20px, #b0c8cc 40%, transparent),
        radial-gradient(ellipse 24px 14px at 786px 20px, #b0c8cc 40%, transparent),
        linear-gradient(90deg, #225791, #1f5590 60%, #16406f 85%, #3f648f);
}

.titlebar h1 {
    flex: 1;
    font-family: "Noto Sans", sans-serif;
    font-size: 12px;
    font-weight: normal;
}

.logo {
    width: 15px;
    height: 14px;
}

.window-buttons {
    align-self: flex-start;
    display: flex;
    height: 18px;
    margin-right: 3px;
    border: 1px solid #c5d3e2;
    border-top: 0;
    border-radius: 0 0 5px 5px;
    overflow: hidden;
    background: linear-gradient(#8fa3bc, #4a6283 50%, #6580a3);
}

.window-buttons button {
    width: 28px;
    display: flex;
    align-items: center;
    justify-content: center;
    border-right: 1px solid #c5d3e2;
}

.window-buttons .close {
    width: 46px;
    border: 0;
    background: linear-gradient(#d79085, #b33420 50%, #cf5a3c);
}

.window-buttons svg {
    width: 12px;
    height: 12px;
}

/* Menu and tool bars */
.bar {
    height: 28px;
    display: flex;
    align-items: center;
    background: #f0f0f0;
    font-size: 12px;
    padding-left: 3px;
}

.toolbar {
    height: 26px;
}

.grip {
    flex: none;
    width: 3px;
    height: 17px;
    background: repeating-linear-gradient(#999 0, #999 1px, transparent 1px, transparent 2px);
}

.menu {
    display: flex;
    gap: 17px;
    width: 702px;
    padding-left: 5px;
    white-space: nowrap;
}

.menu-dxp {
    display: flex;
    margin-right: -4px;
}

.menu-dxp .icon {
    margin-right: 4px;
}

.combo {
    position: relative;
    display: flex;
    background: #fff;
}

.combo::after {
    content: "";
    position: absolute;
    right: 4px;
    top: 50%;
    margin-top: -1px;
    border: 3px solid transparent;
    border-top-color: #000;
    border-bottom: 0;
    pointer-events: none;
}

.combo select {
    appearance: none;
    width: 100%;
    height: 21px;
    border: 0;
    border-radius: 0;
    padding: 0 2px;
    background: linear-gradient(#f0f0f0, #f0f0f0) right 1px center / 11px 19px no-repeat #fff;
}

.combo-address {
    width: 194px;
    margin-left: 6px;
}

.combo-view {
    width: 147px;
    margin: 0 6px 0 3px;
    font-family: "Noto Sans", sans-serif;
}

.arrow {
    flex: none;
    border: 3px solid transparent;
    border-top-color: #000;
    border-bottom: 0;
}

.arrow.dim {
    border-top-color: #999;
}

.arrow.big {
    border-width: 4px;
    border-bottom: 0;
}

.arrow.up {
    border: 3px solid transparent;
    border-top: 0;
    border-bottom-color: #444;
}

.nav-buttons {
    display: flex;
    align-items: center;
    gap: 1px;
}

.tool {
    flex: none;
    width: 23px;
    height: 23px;
    display: flex;
    align-items: center;
    justify-content: center;
}

.tool.active {
    background: #d5e4f4;
    border: 1px solid #3399ff;
}

.sep {
    flex: none;
    width: 1px;
    height: 23px;
    margin: 0 2px;
    background: #a0a0a0;
}

.bar-end {
    margin-left: auto;
    display: flex;
    align-items: center;
}

.drop-tool {
    width: 38px;
    display: flex;
    align-items: center;
    justify-content: space-between;
    padding: 0 6px 0 1px;
}

.utilities {
    padding-right: 1px;
}

.last-grip {
    margin-left: 6px;
}

.filters {
    padding-right: 3px;
}

.filters .combo {
    margin-left: 3px;
}

.combo-filter {
    width: 87px;
}

.combo-all {
    width: 169px;
}

/* Workspace */
.workspace {
    flex: 1;
    display: flex;
    gap: 3px;
    padding: 3px;
    background: #a8a8a8;
    border-bottom: 2px solid #777;
}

.panel {
    flex: none;
    display: flex;
    flex-direction: column;
    background: #dcdcdc;
}

.projects {
    width: 241px;
}

.library {
    width: 277px;
}

.panel-head {
    height: 23px;
    display: flex;
    align-items: center;
    gap: 8px;
    padding: 0 6px 0 5px;
    background: linear-gradient(#b6d2e6, #a5c5dc);
}

.panel-head h2 {
    flex: 1;
    font-size: 12px;
    line-height: 16px;
}

.pin {
    width: 8px;
    height: 10px;
}

.shut {
    width: 8px;
    height: 8px;
}

.btn {
    height: 23px;
    display: flex;
    align-items: center;
    justify-content: center;
    border: 1px solid #777;
    border-radius: 3px;
    box-shadow: inset 0 0 0 1px #fafafa;
    background: linear-gradient(#f2f2f2, #ebebeb 50%, #dadada 51%, #d0d0d0);
}

.project-form {
    display: grid;
    grid-template-columns: 147px 68px;
    gap: 7px 5px;
    align-items: center;
    padding: 10px 10px 13px;
}

.project-form .btn {
    font-size: 12px;
}

.field {
    height: 25px;
    border: 1px solid #8e8e8e;
    background: #f4f4f4;
}

.field select {
    height: 23px;
    padding: 0 4px;
    background: #f4f4f4;
}

.field::after,
.mask-field::after,
.library-pick .combo::after {
    right: 7px;
    border-width: 4px;
    border-bottom: 0;
}

.radios {
    display: flex;
    gap: 17px;
}

.radios label {
    display: flex;
    align-items: center;
    gap: 4px;
}

.radios input {
    appearance: none;
    width: 12px;
    height: 12px;
    border: 1px solid #8e8e8e;
    border-radius: 50%;
    background: #f0f0f0;
}

.radios input:checked {
    border-color: #4a6a86;
    background: radial-gradient(circle, #2b86c4 0, #0f4166 3px, #e8f0f6 4px);
}

.btn-pair {
    display: flex;
    justify-content: space-between;
}

.btn-pair .btn {
    width: 26px;
}

.btn-pair .split {
    width: 38px;
    gap: 3px;
}

.btn-pair i {
    width: 1px;
    height: 17px;
    background: #999;
}

.btn-pair svg {
    width: 18px;
    height: 18px;
}

.tree {
    flex: 1;
    margin: 0 11px;
    padding: 4px;
    border: 1px solid #8e8e8e;
    background: #fff;
}

.tree-row {
    display: flex;
    align-items: center;
    height: 16px;
    padding-left: 1px;
}

.level1 {
    padding-left: 13px;
}

.level2 {
    padding-left: 36px;
}

.box {
    width: 9px;
    height: 9px;
    margin-right: 3px;
    border: 1px solid #555;
    font-size: 10px;
    line-height: 6px;
    text-align: center;
}

.folder {
    width: 14px;
    height: 12px;
    margin-right: 1px;
}

.pcb {
    width: 16px;
    height: 12px;
}

.tree-text {
    flex: 1;
    height: 16px;
    line-height: 16px;
    padding-left: 3px;
    white-space: nowrap;
}

.root .tree-text {
    background: #99b4d1;
}

.lined {
    border-bottom: 1px solid #e0e0e0;
    background:
        linear-gradient(#e0e0e0, #e0e0e0) right 0 top / 1px 16px no-repeat,
        linear-gradient(#e0e0e0, #e0e0e0) right 17px top / 1px 16px no-repeat,
        linear-gradient(#e0e0e0, #e0e0e0) right 35px top / 1px 16px no-repeat;
}

.selected {
    background: #3399ff;
    color: #fff;
}

.panel-tabs {
    display: flex;
    height: 20px;
    margin-top: 11px;
    background: #f0f0f0;
}

.panel-tabs a {
    height: 19px;
    line-height: 19px;
    padding: 0 6px;
    border: 1px solid #bbb;
    border-width: 0 1px 1px 0;
    border-radius: 0 0 2px 2px;
    background: #fff;
    color: #555;
}

/* Editor */
.editor {
    flex: 1;
    min-width: 0;
    display: flex;
    flex-direction: column;
}

.doc-tabs {
    display: flex;
    height: 27px;
    border-bottom: 3px solid #dcdcdc;
}

.doc-tabs a {
    display: flex;
    align-items: center;
    gap: 4px;
    padding: 0 5px;
    color: #fff;
    white-space: nowrap;
}

.doc-tabs .current {
    background: #dcdcdc;
    color: #000;
}

.canvas {
    position: relative;
    flex: 1;
    display: flex;
    padding: 0 0 14px 232px;
    background: #706b69;
}

.board {
    flex: 1;
    border: 1px dashed #ccc;
    border-width: 0 0 1px 1px;
    background: #000;
}

.outline {
    width: 100%;
    height: 100%;
}

/* coordinates readout floats over the sheet */
.hud {
    position: absolute;
    left: 0;
    top: 0;
    width: 228px;
    height: 70px;
    padding: 6px 5px;
    border: 1px solid #16191c;
    border-width: 0 2px 2px 0;
    background: linear-gradient(#1b1c1e, #2f5470);
    color: #d6d3a4;
    font-family: "Liberation Sans", Arial, sans-serif;
    font-weight: bold;
    white-space: nowrap;
}

.hud table {
    border-collapse: collapse;
    font-size: 13px;
    line-height: 15px;
}

.hud td {
    padding: 0;
    width: 68px;
}

.hud strong {
    display: block;
    font-size: 16px;
    line-height: 17px;
    color: #ff0;
}

.hud p {
    font-size: 11px;
    line-height: 14px;
}

.layer-bar {
    display: flex;
    height: 20px;
    background: #f0f0f0;
    white-space: nowrap;
}

.layer-set {
    display: flex;
    width: 46px;
    height: 14px;
    margin: 3px 3px 0;
    border: 1px solid #777;
    color: #777;
    line-height: 14px;
}

.layer-colour {
    width: 26px;
    height: 12px;
    margin-right: 4px;
    border-right: 1px solid #777;
    background: #f0f;
}

.layers {
    display: flex;
    height: 19px;
}

.layers a {
    display: flex;
    align-items: center;
    gap: 4px;
    padding: 0 3px 0 6px;
    border: 1px solid #c4c4c4;
    border-width: 0 1px 1px 0;
    border-radius: 0 0 2px 0;
    background: #fff;
}

.layers .current {
    background: #dcdcdc;
    font-weight: bold;
}

.layers i {
    width: 10px;
    height: 10px;
    border: 1px solid #999;
}

.red { background: #f00; }
.blue { background: #00f; }
.magenta { background: #f0f; }
.yellow { background: #ff0; }
.olive { background: #808000; }
.gray { background: #808080; }
.maroon { background: #800000; }
.purple { background: #800080; }
.crimson { background: #ff0028; }
.silver { background: #c0c0c0; }

.mask-buttons {
    margin-left: auto;
    display: flex;
    padding-right: 1px;
    font-size: 12px;
    color: #666;
}

.mask-buttons button {
    padding: 0 4px;
    border: 1px solid #d0d0c8;
}

.mask-buttons button:nth-child(3) {
    padding: 0 7px;
}

.mask {
    width: 26px;
    height: 16px;
}

.mask-buttons button:first-child {
    padding: 0 2px;
}

/* Libraries panel */
.library-body {
    flex: 1;
    display: flex;
    flex-direction: column;
    padding: 9px 3px 8px 8px;
}

.library-body > * {
    margin-right: 10px;
}

.library-body > .fold {
    margin-right: 0;
}

.library-buttons {
    display: grid;
    grid-template-columns: 64px 64px 104px;
    gap: 8px;
    margin-bottom: 8px;
    padding-left: 1px;
}

.library-pick {
    display: flex;
    align-items: center;
    height: 21px;
    margin-bottom: 7px;
    padding: 0 2px 0 5px;
    border-top: 1px solid #aaa;
    background: #fff;
    font-size: 12px;
}

.library-pick .combo {
    flex: 1;
}

.library-pick select {
    height: 19px;
    padding-left: 3px;
    background: #fff;
}

.library-pick button {
    width: 12px;
    font-size: 8px;
}

.mask-field {
    height: 21px;
    margin-bottom: 7px;
    border-top: 1px solid #aaa;
}

.mask-field::after {
    right: 4px;
}

.mask-field select {
    height: 19px;
    background: #fff;
}

.box-frame {
    flex: 1;
    border: 1px solid #8e8e8e;
    background: #fff;
}

.part-list {
    flex: none;
    display: flex;
    height: 214px;
    overflow: hidden;
}

.list-main {
    flex: 1;
}

.list-head {
    display: flex;
    align-items: center;
    justify-content: space-between;
    height: 18px;
    padding: 0 6px 0 3px;
    border: 1px solid #999;
    border-width: 0 1px 1px 0;
    background: #f0f0f0;
    font-size: 12px;
}

.sort {
    width: 8px;
    height: 8px;
}

.part-list ul {
    list-style: none;
}

.part-list li {
    display: flex;
    height: 16px;
    padding-left: 3px;
}

.part-list li > span:last-child {
    flex: 1;
    padding-left: 2px;
}

.part-list .on span:last-child {
    background: #f0f0f0;
}

.stem {
    width: 14px;
    background:
        linear-gradient(90deg, #999 50%, transparent 50%) 4px 8px / 2px 1px repeat-x,
        linear-gradient(#999 50%, transparent 50%) 4px 0 / 1px 2px repeat-y;
}

.plus::before {
    content: "+";
    display: block;
    width: 9px;
    height: 9px;
    margin-top: 4px;
    border: 1px solid #666;
    background: #fff;
    font-size: 10px;
    font-weight: bold;
    line-height: 7px;
    text-align: center;
}

.part {
    width: 14px;
    height: 16px;
}

.scrollbar {
    width: 15px;
    display: flex;
    flex-direction: column;
    align-items: center;
    padding: 8px 0 7px;
    background: #f0f0f0;
}

.thumb {
    width: 14px;
    height: 15px;
    margin: 7px 0 auto;
    border: 1px solid #999;
    border-radius: 1px;
    background: linear-gradient(90deg, #f4f4f4, #d0d0d0);
}

.count {
    height: 23px;
    padding-left: 3px;
}

.fold {
    display: flex;
    justify-content: space-between;
    gap: 1px;
    margin-bottom: 5px;
}

.chev {
    width: 9px;
    height: 6px;
    margin-top: 2px;
}

.symbol-fold {
    height: 68px;
}

.model-fold {
    height: 111px;
}

.footprint-fold {
    height: 138px;
}

.supplier-fold {
    height: 138px;
}

.last-fold {
    flex: 1;
    margin-bottom: 0;
}

.symbol-view {
    background: #ffffe1;
}

.symbol-view svg {
    width: 40px;
    height: 66px;
    margin: 0 auto;
}

.models, .suppliers {
    width: 100%;
    table-layout: fixed;
    border-collapse: separate;
    border-spacing: 0;
    text-align: left;
}

th {
    padding: 0 3px;
    border: 1px solid #999;
    border-width: 0 1px 1px 0;
    background: #f0f0f0;
    font-weight: normal;
}

th:last-child {
    border-right: 0;
}

.models th {
    height: 18px;
}

.models th:first-child {
    width: 127px;
    font-size: 12px;
}

.models td {
    position: relative;
    height: 16px;
    padding: 0 2px;
}

.models td:first-child {
    display: flex;
    gap: 3px;
    padding-left: 19px;
}

.models .on {
    background: #f0f0f0;
}

.models .on td:first-child {
    background: linear-gradient(#fff, #fff) left / 32px 16px no-repeat;
}

.foot {
    width: 12px;
    height: 15px;
}

.tick {
    position: absolute;
    left: 25px;
    bottom: 1px;
    width: 7px;
    height: 7px;
}

.footprint-view {
    position: relative;
    padding-top: 25px;
    background: linear-gradient(#fff, #dcdcdc);
}

.footprint {
    width: 79px;
    height: 88px;
    margin: 0 auto;
}

/* sits over the preview corner */
.footprint-view button {
    position: absolute;
    left: 8px;
    bottom: 8px;
    width: 25px;
    height: 25px;
    display: flex;
    align-items: center;
    justify-content: center;
    border: 1px solid #555;
    background: #f0f0f0;
}

.footprint-view button svg {
    width: 18px;
    height: 18px;
}

.suppliers {
    font-size: 12px;
    line-height: 13px;
}

.suppliers th {
    width: 75px;
    height: 31px;
    padding: 2px 3px;
    vertical-align: top;
}

.suppliers th:last-child {
    width: auto;
    padding-left: 14px;
}

.suppliers th span {
    display: flex;
    justify-content: space-between;
    align-items: flex-end;
    height: 18px;
    padding-right: 4px;
    line-height: 22px;
}

/* Status bar */
.status {
    position: relative;
    display: flex;
    height: 22px;
    background: #f0f0f0;
    white-space: nowrap;
}

.status-text {
    display: flex;
    width: 486px;
    padding: 2px 0 0 5px;
    border-right: 1px solid #aaa;
}

.status-text span:nth-child(1) {
    width: 138px;
}

.status-text span:nth-child(2) {
    width: 94px;
}

.status-cell {
    width: 487px;
    border-right: 1px solid #aaa;
}

.status-buttons {
    margin-left: auto;
    display: flex;
    height: 18px;
    margin-top: 2px;
    padding-right: 8px;
    color: #666;
}

.status-buttons button {
    padding: 0 7px;
    border: 1px solid #ccc;
    border-left-width: 0;
    background: #f8f8f8;
}

.status-buttons button:first-child {
    border-left-width: 1px;
}

.status-buttons .tight {
    padding: 0 4px;
}

.status-buttons .wide {
    padding: 0 10px;
}

.status-buttons .cjk {
    font-size: 12px;
}

.status-buttons .more {
    margin-left: 4px;
    padding: 0 2px;
    border-left-width: 1px;
}

/* author mark lies over the status buttons */
.watermark {
    position: absolute;
    right: 18px;
    top: -10px;
    font-size: 20px;
    font-weight: 300;
    line-height: 24px;
    color: #e4e4e4b0;
    text-shadow: 1px 1px 1px #555;
}
```
